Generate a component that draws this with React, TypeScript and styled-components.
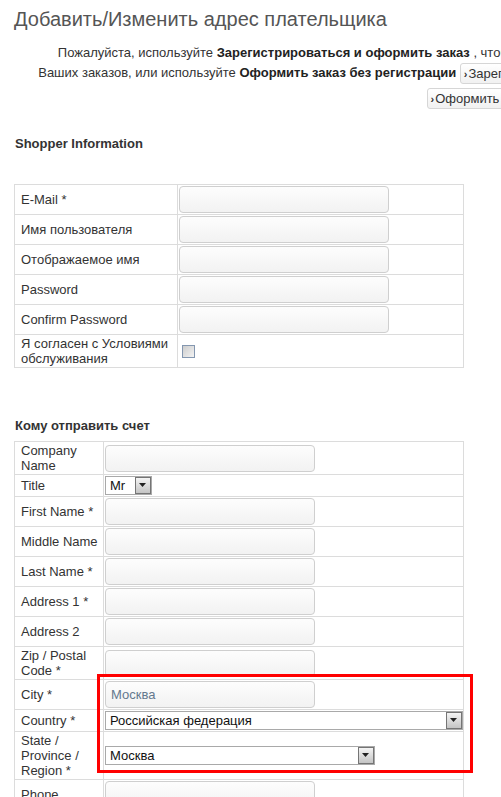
import React from 'react';
import styled, { createGlobalStyle } from 'styled-components';

const GlobalStyle = createGlobalStyle`
  html, body {
    margin: 0;
    padding: 0;
    background: #fff;
    overflow: hidden;
  }
  body {
    font-family: "Liberation Sans", Arial, sans-serif;
    font-size: 13px;
    color: #333;
  }
`;

const Page = styled.div`
  position: relative;
  width: 1000px;
  padding: 7px 0 40px 14px;
`;

const Title = styled.h2`
  margin: 0;
  font-size: 20px;
  line-height: 24px;
  font-weight: normal;
  color: #555;
`;

const Intro = styled.div`
  width: 698px;
  margin-top: 12px;
  text-align: right;
  line-height: 20px;
  color: #333;

  strong {
    color: #222;
  }
`;

const ButtonRow = styled.div<{ $offset: number }>`
  width: 698px;
  margin-top: 4px;
  padding-right: ${p => p.$offset}px;
  box-sizing: border-box;
  text-align: right;
`;

const ControlButton = styled.span<{ $tail?: number }>`
  display: inline-block;
  height: 21px;
  line-height: 19px;
  padding: 0 ${p => 5 + (p.$tail ?? 0)}px 0 3px;
  box-sizing: border-box;
  border: 1px solid #d6d6d6;
  border-radius: 3px;
  background: linear-gradient(to bottom, #ffffff, #f1f1f1);
  color: #333;
  vertical-align: middle;
  white-space: nowrap;

  &::before {
    content: '›';
    font-size: 11px;
    font-weight: bold;
    margin-right: 1px;
  }
`;

const SectionHeading = styled.h3<{ $top: number; $bottom: number }>`
  margin: ${p => p.$top}px 0 ${p => p.$bottom}px 1px;
  font-size: 13px;
  line-height: 16px;
  font-weight: bold;
  color: #333;
`;

const FormTable = styled.table`
  width: 450px;
  border-collapse: collapse;
  table-layout: fixed;
`;

const LabelCol = styled.col<{ $w: number }>`
  width: ${p => p.$w}px;
`;

const LabelCell = styled.td`
  border: 1px solid #dcdcdc;
  padding: 1px 2px 1px 6px;
  line-height: 15px;
  vertical-align: middle;
  color: #333;
`;

const FieldCell = styled.td`
  border: 1px solid #dcdcdc;
  padding: 1px;
  vertical-align: middle;
  line-height: 0;
`;

const TextInput = styled.input`
  width: 210px;
  height: 27px;
  box-sizing: border-box;
  margin: 0;
  padding: 0 5px;
  border: 1px solid #cfcfcf;
  border-radius: 4px;
  background: linear-gradient(to bottom, #fdfdfd, #f2f2f2);
  font-family: "Liberation Sans", Arial, sans-serif;
  font-size: 13px;
  color: #64798e;
  vertical-align: middle;
  outline: none;
`;

const FakeCheckbox = styled.span`
  display: inline-block;
  width: 11px;
  height: 11px;
  margin: 0 0 0 3px;
  border: 1px solid #8497b0;
  background: linear-gradient(135deg, #cdcdcd, #f3f3f3);
  vertical-align: middle;
`;

const SelectBox = styled.div<{ $w: number }>`
  display: inline-flex;
  align-items: center;
  justify-content: space-between;
  width: ${p => p.$w}px;
  height: 19px;
  box-sizing: border-box;
  border: 1px solid #a9a9a9;
  background: #fff;
  line-height: 17px;
  vertical-align: middle;
`;

const SelectText = styled.span`
  padding-left: 4px;
  font-size: 13px;
  color: #111;
  white-space: nowrap;
`;

const ArrowBox = styled.span`
  display: flex;
  align-items: center;
  justify-content: center;
  width: 16px;
  height: 17px;
  box-sizing: border-box;
  border: 1px solid #757575;
  background: linear-gradient(to bottom, #f4f4f4, #c4c4c4);
`;

const Highlight = styled.div`
  position: absolute;
  left: 97px;
  top: 674px;
  width: 376px;
  height: 99px;
  box-sizing: border-box;
  border: 3px solid #ff0000;
  pointer-events: none;
`;

const Arrow = () => (
  <svg width="8" height="5" viewBox="0 0 8 5">
    <path d="M0 0 H7 L3.5 4 Z" fill="#222" />
  </svg>
);

const Select = ({ width, value }: { width: number; value: string }) => (
  <SelectBox $w={width}>
    <SelectText>{value}</SelectText>
    <ArrowBox>
      <Arrow />
    </ArrowBox>
  </SelectBox>
);

const shopperRows = ['E-Mail *', 'Имя пользователя', 'Отображаемое имя', 'Password', 'Confirm Password'];

type BillRow = { label: string; kind: 'input' | 'select'; value?: string; width?: number };

const billRows: BillRow[] = [
  { label: 'Company Name', kind: 'input' },
  { label: 'Title', kind: 'select', value: 'Mr', width: 47 },
  { label: 'First Name *', kind: 'input' },
  { label: 'Middle Name', kind: 'input' },
  { label: 'Last Name *', kind: 'input' },
  { label: 'Address 1 *', kind: 'input' },
  { label: 'Address 2', kind: 'input' },
  { label: 'Zip / Postal Code *', kind: 'input' },
  { label: 'City *', kind: 'input', value: 'Москва' },
  { label: 'Country *', kind: 'select', value: 'Российская федерация', width: 358 },
  { label: 'State / Province / Region *', kind: 'select', value: 'Москва', width: 270 },
  { label: 'Phone', kind: 'input' },
  { label: 'Mobile phone', kind: 'input' },
  { label: 'Fax', kind: 'input' },
];

export default function App() {
  return (
    <>
      <GlobalStyle />
      <Page>
        <Title>Добавить/Изменить адрес плательщика</Title>

        <Intro>
          Пожалуйста, используйте <strong>Зарегистрироваться и оформить заказ</strong> , чтобы получить доступ к истории всех
          <br />
          Ваших заказов, или используйте <strong>Оформить заказ без регистрации</strong>{' '}
          <ControlButton $tail={3}>Зарегистрироваться и оформить заказ</ControlButton>
        </Intro>
        <ButtonRow $offset={68}>
          <ControlButton>Оформить заказ без регистрации</ControlButton>
        </ButtonRow>

        <SectionHeading $top={27} $bottom={32}>Shopper Information</SectionHeading>
        <FormTable>
          <colgroup>
            <LabelCol $w={163} />
            <col />
          </colgroup>
          <tbody>
            {shopperRows.map(label => (
              <tr key={label}>
                <LabelCell>{label}</LabelCell>
                <FieldCell>
                  <TextInput type={label.startsWith('Pass') || label.startsWith('Confirm') ? 'password' : 'text'} readOnly />
                </FieldCell>
              </tr>
            ))}
            <tr>
              <LabelCell>Я согласен с Условиями обслуживания</LabelCell>
              <FieldCell>
                <FakeCheckbox />
              </FieldCell>
            </tr>
          </tbody>
        </FormTable>

        <SectionHeading $top={50} $bottom={7}>Кому отправить счет</SectionHeading>
        <FormTable>
          <colgroup>
            <LabelCol $w={89} />
            <col />
          </colgroup>
          <tbody>
            {billRows.map(row => (
              <tr key={row.label}>
                <LabelCell>{row.label}</LabelCell>
                <FieldCell>
                  {row.kind === 'input' ? (
                    <TextInput readOnly value={row.value ?? ''} />
                  ) : (
                    <Select width={row.width ?? 100} value={row.value ?? ''} />
                  )}
                </FieldCell>
              </tr>
            ))}
          </tbody>
        </FormTable>

        <Highlight />
      </Page>
    </>
  );
}
